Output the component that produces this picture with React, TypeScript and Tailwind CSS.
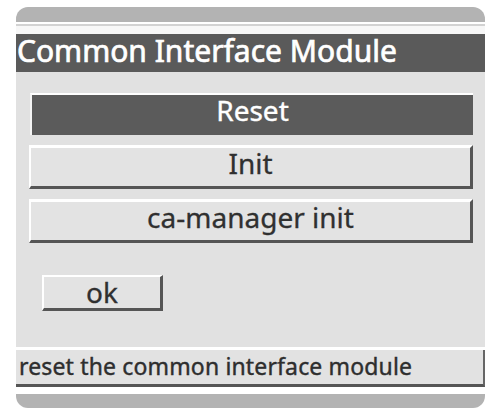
const font = { fontFamily: '"Noto Sans", "Open Sans", sans-serif' };

function MenuButton({ label, active }: { label: string; active?: boolean }) {
  if (active) {
    return (
      <div className="mx-[14px] mr-[12px] h-[42px] flex items-center justify-center bg-[#5b5b5b] border-t-2 border-l-2 border-t-white border-l-[#f4f4f4] text-white text-[28px] leading-none pb-[11px] [-webkit-text-stroke:0.4px]">
        {label}
      </div>
    );
  }
  return (
    <div className="ml-[13px] mr-[12px] h-[44px] flex items-center justify-center bg-[#e3e3e3] border-t-[3px] border-l-2 border-b-[3px] border-r-[3px] border-t-white border-l-white border-b-[#555555] border-r-[#555555] text-[#303030] text-[28px] leading-none pb-[8px] [-webkit-text-stroke:0.3px]">
      {label}
    </div>
  );
}

export default function App() {
  return (
    <div className="w-[490px] h-[412px] bg-white overflow-hidden" style={font}>
      <div className="pl-[16px] pr-[5px] pt-[7px] flex flex-col">
        <div className="h-[15px] bg-[#b3b3b3] rounded-t-[12px]" />
        <div className="h-[2px] bg-white" />
        <div className="h-[2px] bg-[#d2d2d2]" />
        <div className="h-[8px] bg-[#f7f7f7]" />

        <div className="h-[38px] bg-[#5a5a5a] flex items-center pl-[1px] text-white text-[30px] leading-none pb-[5px] [-webkit-text-stroke:0.7px]">
          Common Interface Module
        </div>

        <div className="h-[275px] bg-[#e1e1e1] flex flex-col pt-[21px]">
          <MenuButton label="Reset" active />
          <div className="h-[10px]" />
          <MenuButton label="Init" />
          <div className="h-[10px]" />
          <MenuButton label="ca-manager init" />

          <div className="mt-[32px] ml-[26px] w-[121px] h-[36px] flex items-center justify-center bg-[#e3e3e3] border-t-2 border-l-2 border-b-[3px] border-r-[3px] border-t-white border-l-white border-b-[#555555] border-r-[#555555] text-[#303030] text-[28px] leading-none pb-[1px] [-webkit-text-stroke:0.3px]">
            ok
          </div>
        </div>

        <div className="h-[3px] bg-white" />
        <div className="h-[37px] bg-[#e2e2e2] border-b-[3px] border-r-2 border-b-[#555555] border-r-[#666666] flex items-center pl-[3px] text-[#2e2e2e] text-[23px] leading-none tracking-[0.15px] pb-[2px] [-webkit-text-stroke:0.4px]">
          reset the common interface module
        </div>
        <div className="h-[7px] bg-white" />
        <div className="h-[14px] bg-[#b3b3b3] rounded-b-[12px]" />
      </div>
    </div>
  );
}
